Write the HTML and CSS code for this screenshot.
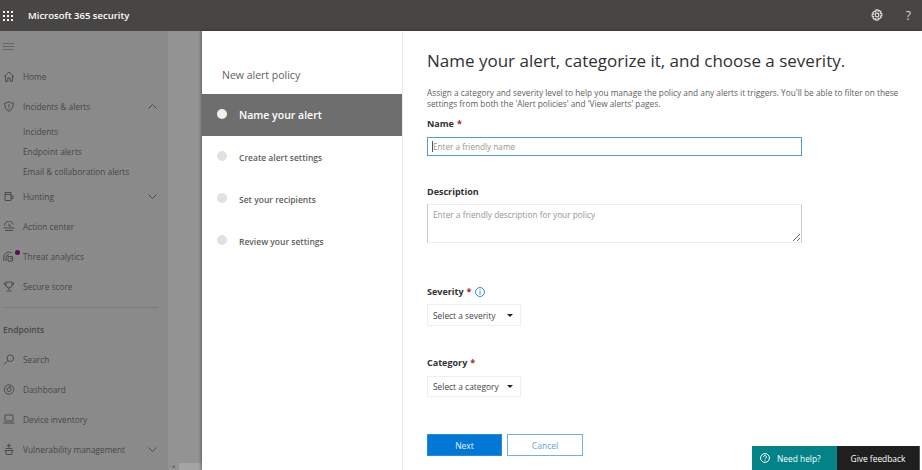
FILE: index.html
```html
<!DOCTYPE html>
<html lang="en">

<head>
    <meta charset="UTF-8">
    <meta name="viewport" content="width=device-width, initial-scale=1.0">
    <title>Microsoft 365 security</title>
    <link rel="stylesheet" href="styles.css">
</head>

<body>
    <header class="topbar">
        <svg class="waffle" width="10" height="10" viewBox="0 0 10 10" fill="#fff">
            <rect x="0" y="0" width="2" height="2"/><rect x="4" y="0" width="2" height="2"/><rect x="8" y="0" width="2" height="2"/>
            <rect x="0" y="4" width="2" height="2"/><rect x="4" y="4" width="2" height="2"/><rect x="8" y="4" width="2" height="2"/>
            <rect x="0" y="8" width="2" height="2"/><rect x="4" y="8" width="2" height="2"/><rect x="8" y="8" width="2" height="2"/>
        </svg>
        <span class="brand">Microsoft 365 security</span>
        <svg class="gear" width="12" height="12" viewBox="0 0 12 12" fill="none" stroke="#d8d8d8" stroke-width="1.2">
            <circle cx="6" cy="6" r="1.8"/>
            <path d="M5 .8h2l.3 1.5 1.3-.7 1.5 1.5-.8 1.2 1.5.4v2l-1.5.4.8 1.3-1.5 1.4-1.3-.7L7 11.2H5l-.3-1.5-1.3.7-1.5-1.4.8-1.3-1.5-.4v-2l1.5-.4-.8-1.2 1.5-1.5 1.3.7z"/>
        </svg>
        <span class="help-mark">?</span>
    </header>

    <div class="main">
        <nav class="sidebar">
            <svg class="hamburger" width="11" height="7" viewBox="0 0 11 7" stroke="#666" stroke-width="1"><path d="M0 .5h11M0 3.5h11M0 6.5h11"/></svg>

            <a class="nav-row">
                <svg width="11" height="11" viewBox="0 0 11 11" fill="none" stroke="#4c4c4c"><path d="M.7 5.6 5.5 1l4.8 4.6M2 4.6v5.7h2.3V7h2.4v3.3H9V4.6"/></svg>
                Home
            </a>
            <a class="nav-row">
                <svg width="11" height="11" viewBox="0 0 11 11" fill="none" stroke="#4c4c4c"><path d="M5.500.7c1.300 1 2.800 1.400 4.300 1.400 0 4-1.300 7-4.300 8.200-3-1.200-4.300-4.200-4.300-8.200C2.700 2.100 4.200 1.700 5.500.7zM5.500 3v3.500M5.500 7.500v1"/></svg>
                Incidents &amp; alerts
                <svg class="chevron" width="9" height="5" viewBox="0 0 9 5" fill="none" stroke="#4c4c4c"><path d="M.5 4.500l4-4 4 4"/></svg>
            </a>
            <a class="nav-sub">Incidents</a>
            <a class="nav-sub">Endpoint alerts</a>
            <a class="nav-sub">Email &amp; collaboration alerts</a>
            <a class="nav-row">
                <svg width="11" height="11" viewBox="0 0 11 11" fill="none" stroke="#4c4c4c"><path d="M1.500 1.500h6v8h-6zM1.500 3.500h6M7.500 5h2v2.500h-2"/></svg>
                Hunting
                <svg class="chevron" width="9" height="5" viewBox="0 0 9 5" fill="none" stroke="#4c4c4c"><path d="M.5.500l4 4 4-4"/></svg>
            </a>
            <a class="nav-row">
                <svg width="12" height="11" viewBox="0 0 12 11" fill="none" stroke="#4c4c4c"><path d="M1.500 4.500A4.300 4.300 0 0 1 10 3.500M.5 7h11M2 9.500h8M6 2.500v2.500h2"/></svg>
                Action center
            </a>
            <a class="nav-row">
                <span class="threat-icon">
                    <svg width="12" height="11" viewBox="0 0 12 11" fill="none" stroke="#4c4c4c"><path d="M.8 10V6a5 5 0 0 1 8-4M3 10V6.500a3 3 0 0 1 3-3M5 5.500h4.500v4.500H5zM7 7.500h2"/></svg>
                    <i class="threat-dot"></i>
                </span>
                Threat analytics
            </a>
            <a class="nav-row">
                <svg width="11" height="11" viewBox="0 0 11 11" fill="none" stroke="#4c4c4c"><path d="M2.500 1h6v3a3 3 0 0 1-6 0zM2.500 2H.7c0 1.500.6 2.500 2 2.800M8.500 2h1.800c0 1.500-.6 2.500-2 2.800M5.500 7v2M3 10h5"/></svg>
                Secure score
            </a>
            <hr class="nav-divider">
            <div class="nav-heading">Endpoints</div>
            <a class="nav-row">
                <svg width="11" height="11" viewBox="0 0 11 11" fill="none" stroke="#4c4c4c"><circle cx="6.800" cy="4.200" r="3.300"/><path d="M4.400 6.600.6 10.400"/></svg>
                Search
            </a>
            <a class="nav-row">
                <svg width="11" height="11" viewBox="0 0 11 11" fill="none" stroke="#4c4c4c"><circle cx="5.500" cy="5.500" r="4.700"/><circle cx="5.500" cy="5.500" r="2"/><path d="M5.500 3.500 7.500 2"/></svg>
                Dashboard
            </a>
            <a class="nav-row">
                <svg width="12" height="10" viewBox="0 0 12 10" fill="none" stroke="#4c4c4c"><path d="M2 1h8v6H2zM.3 9h11.400"/></svg>
                Device inventory
            </a>
            <a class="nav-row">
                <svg width="11" height="12" viewBox="0 0 11 12" fill="none" stroke="#4c4c4c"><path d="M5.500.5v5M3.500 2.500h4M2 5.500h7M1 7.500h9M2 7.500l.8 4h5.400l.8-4"/></svg>
                Vulnerability management
                <svg class="chevron" width="9" height="5" viewBox="0 0 9 5" fill="none" stroke="#4c4c4c"><path d="M.5.500l4 4 4-4"/></svg>
            </a>
        </nav>

        <div class="backdrop">
            <div class="scroll-arrow">&#9666;</div>
        </div>

        <section class="panel">
            <aside class="wizard">
                <div class="wizard-title">New alert policy</div>
                <div class="step step-active"><i class="step-dot"></i>Name your alert</div>
                <div class="step"><i class="step-dot"></i>Create alert settings</div>
                <div class="step"><i class="step-dot"></i>Set your recipients</div>
                <div class="step"><i class="step-dot"></i>Review your settings</div>
            </aside>

            <form class="form">
                <h1>Name your alert, categorize it, and choose a severity.</h1>
                <p class="intro">Assign a category and severity level to help you manage the policy and any alerts it triggers. You'll be able to filter on these settings from both the 'Alert policies' and 'View alerts' pages.</p>

                <label class="field-label name-label" for="alertName">Name <span class="req">*</span></label>
                <div class="name-wrap">
                    <input class="name-input" id="alertName" type="text" placeholder="Enter a friendly name">
                </div>

                <label class="field-label desc-label" for="alertDesc">Description</label>
                <textarea class="desc-input" id="alertDesc" placeholder="Enter a friendly description for your policy"></textarea>

                <div class="field-label severity-label">
                    Severity <span class="req">*</span>
                    <svg class="info" width="10" height="10" viewBox="0 0 10 10" fill="none" stroke="#2b88d8"><circle cx="5" cy="5" r="4.500"/><path d="M5 4.200v3.300M5 2.200v1"/></svg>
                </div>
                <div class="dropdown">Select a severity<i class="caret"></i></div>

                <div class="field-label category-label">Category <span class="req">*</span></div>
                <div class="dropdown dropdown-category">Select a category<i class="caret"></i></div>

                <div class="actions">
                    <button type="button" class="btn btn-primary">Next</button>
                    <button type="button" class="btn btn-cancel">Cancel</button>
                </div>
            </form>
        </section>
    </div>

    <div class="float-help">
        <div class="need-help">
            <svg width="10" height="10" viewBox="0 0 10 10" fill="none" stroke="#fff"><circle cx="5" cy="5" r="4.400"/><path d="M3.600 3.800a1.400 1.400 0 1 1 2.200 1.200c-.5.300-.8.600-.8 1.100M5 7v.8"/></svg>
            Need help?
        </div>
        <div class="give-feedback">Give feedback</div>
    </div>
</body>

</html>
```

FILE: styles.css
```css
* {
    box-sizing: border-box;
}

html,
body {
    margin: 0;
    height: 100%;
    overflow: hidden;
}

body {
    width: 922px;
    height: 470px;
    position: relative;
    font-family: "Open Sans", "Liberation Sans", sans-serif;
    background-color: #fff;
    color: #323130;
}

.topbar {
    height: 31px;
    background-color: #474644;
    display: flex;
    align-items: center;
    padding-left: 3px;
    color: #fff;
}

.waffle {
    margin-right: 15px;
}

.brand {
    font-size: 9.5px;
    font-weight: 600;
}

.gear {
    margin-left: auto;
    margin-right: 23px;
    position: relative;
    top: -1px;
}

.help-mark {
    font-size: 12px;
    color: #d8d8d8;
    margin-right: 11px;
}

.main {
    display: flex;
    height: 439px;
}

.sidebar {
    width: 168px;
    background-color: #8a8a8a;
    color: #484848;
    padding-top: 12px;
    display: flex;
    flex-direction: column;
    flex-shrink: 0;
}

.hamburger {
    display: block;
    margin: 0 0 11px 3px;
}

.nav-row {
    height: 30px;
    display: flex;
    align-items: center;
    padding-left: 3px;
    font-size: 8.3px;
    flex-shrink: 0;
}

.nav-row > svg:first-child,
.threat-icon {
    width: 12px;
    margin-right: 8px;
    flex-shrink: 0;
}

.threat-icon {
    position: relative;
    height: 11px;
}

.threat-dot {
    position: absolute;
    top: -1px;
    left: 12px;
    width: 5px;
    height: 5px;
    border-radius: 50%;
    background-color: #5c0a5c;
}

.chevron {
    margin-left: auto;
    margin-right: 11px;
}

.nav-sub {
    height: 20px;
    display: flex;
    align-items: center;
    padding-left: 23px;
    font-size: 8.3px;
    flex-shrink: 0;
}

.nav-divider {
    border: 0;
    border-top: 1px solid #7a7a7a;
    margin: 6px 11px 0 3px;
    width: 155px;
    height: 1px;
}

.nav-heading {
    font-size: 8.5px;
    font-weight: 600;
    padding-left: 3px;
    margin-top: 15px;
    margin-bottom: 8px;
    line-height: 13px;
}

.backdrop {
    width: 34px;
    background-color: #939393;
    position: relative;
    flex-shrink: 0;
}

.scroll-arrow {
    position: absolute;
    left: 4px;
    bottom: 1px;
    font-size: 5px;
    line-height: 6px;
    color: #555;
}

.backdrop::after {
    content: "";
    position: absolute;
    left: 11px;
    right: 0;
    bottom: 0;
    height: 7px;
    background-color: #a4a4a4;
}

.panel {
    flex: 1;
    display: flex;
    background-color: #fff;
    box-shadow: -1px 0 3px rgba(0, 0, 0, 0.35);
    position: relative;
}

.wizard {
    width: 201px;
    border-right: 1px solid #eaeaea;
    flex-shrink: 0;
}

.wizard-title {
    font-size: 10.5px;
    color: #605e5c;
    padding-left: 20px;
    line-height: 15px;
    margin-top: 37px;
    margin-bottom: 11px;
}

.step {
    height: 42px;
    display: flex;
    align-items: center;
    padding-left: 15px;
    font-size: 8.5px;
    font-weight: 600;
    color: #605e5c;
}

.step-dot {
    width: 10px;
    height: 10px;
    border-radius: 50%;
    background-color: #e1e1e1;
    margin-right: 12px;
    position: relative;
    top: -1px;
}

.step-active {
    background-color: #6e6e6e;
    color: #fff;
    font-size: 10.5px;
}

.step-active .step-dot {
    background-color: #f1f1f1;
}

.form {
    flex: 1;
    padding: 18px 0 0 24px;
    display: flex;
    flex-direction: column;
    align-items: flex-start;
}

h1 {
    margin: 0;
    font-size: 17px;
    line-height: 24px;
    font-weight: 500;
    color: #323130;
}

.intro {
    margin: 14px 0 0;
    width: 490px;
    font-size: 8.3px;
    line-height: 11px;
    color: #605e5c;
}

.field-label {
    font-size: 9px;
    font-weight: 700;
    line-height: 13px;
    color: #323130;
    display: flex;
    align-items: center;
    gap: 3px;
}

.name-label {
    margin-top: 8px;
}

.req {
    color: #a4262c;
}

.name-wrap {
    position: relative;
    margin-top: 7px;
}

/* text cursor sitting in the focused field */
.name-wrap::after {
    content: "";
    position: absolute;
    left: 5px;
    top: 4px;
    width: 1px;
    height: 11px;
    background-color: #555;
}

.name-input {
    width: 375px;
    height: 19px;
    border: 1px solid #4f9ae0;
    padding: 0 5px;
    font: 8.2px "Open Sans", sans-serif;
    outline: 0;
    display: block;
}

.name-input::placeholder,
.desc-input::placeholder {
    color: #969492;
    opacity: 1;
}

.desc-label {
    margin-top: 29px;
}

.desc-input {
    width: 375px;
    height: 39px;
    margin-top: 6px;
    border: 1px solid #ededed;
    border-left-color: #c8c8c8;
    border-right-color: #c8c8c8;
    padding: 4px 5px;
    font: 8.3px "Open Sans", sans-serif;
    display: block;
}

.severity-label {
    margin-top: 42px;
}

.info {
    margin-left: 1px;
}

.dropdown {
    width: 94px;
    height: 22px;
    margin-top: 6px;
    border: 1px solid #eee;
    font-size: 8.4px;
    color: #444;
    padding-left: 5px;
    display: flex;
    align-items: center;
}

.dropdown-category {
    height: 21px;
    margin-top: 7px;
}

.caret {
    margin-left: auto;
    margin-right: 7px;
    border-left: 3px solid transparent;
    border-right: 3px solid transparent;
    border-top: 3px solid #222;
}

.category-label {
    margin-top: 30px;
}

.actions {
    display: flex;
    gap: 5px;
    margin-top: 37px;
}

.btn {
    width: 75px;
    height: 22px;
    font: 8.5px "Open Sans", sans-serif;
    border: 1px solid #2b88d8;
    padding: 0;
}

.btn-primary {
    background-color: #0078d4;
    color: #e8f2fb;
}

.btn-cancel {
    width: 76px;
    background-color: #fff;
    border-color: #71afe5;
    color: #5ba4df;
}

.float-help {
    position: absolute;
    left: 752px;
    top: 446px;
    display: flex;
    height: 24px;
    color: #fff;
}

.need-help {
    width: 85px;
    background-color: #038387;
    display: flex;
    align-items: center;
    gap: 7px;
    padding-left: 8px;
    font-size: 8.4px;
}

.give-feedback {
    width: 83px;
    background-color: #1f1f1f;
    display: flex;
    align-items: center;
    justify-content: center;
    border-right: 1px solid #555;
    font-size: 8.4px;
}
```
